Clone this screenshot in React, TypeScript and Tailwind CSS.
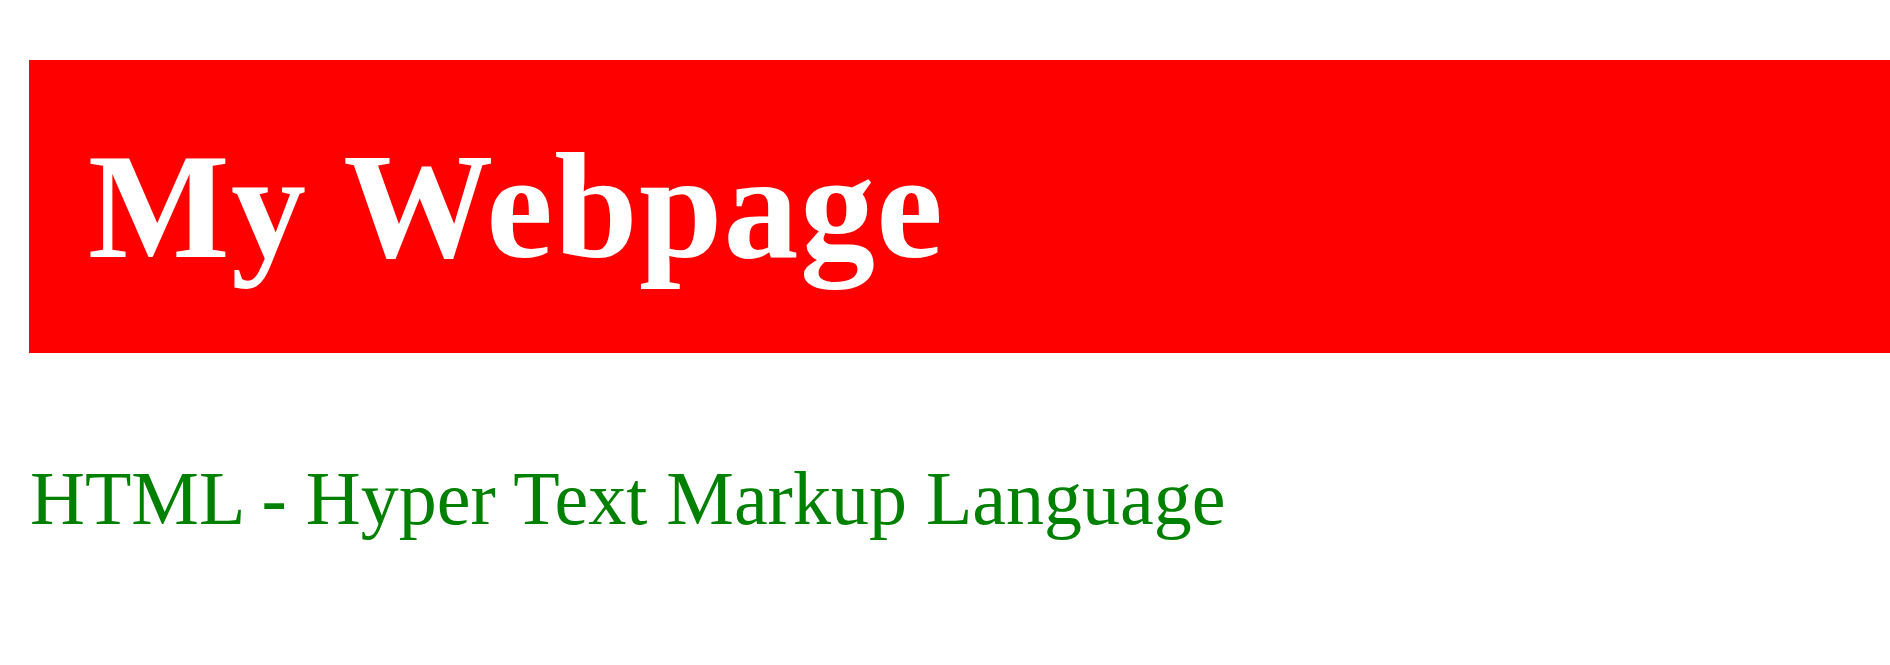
import React from 'react';

export default function App() {
  return (
    <div className="min-h-[665px] bg-white pt-[60px] font-['Liberation_Serif','Times_New_Roman',serif]">
      <div className="ml-[29px] h-[293px] w-[1900px] bg-[#ff0000] pl-[59px] pt-[71px]">
        <h1 className="text-[150px] font-bold leading-none tracking-[1.3px] text-white">My Webpage</h1>
      </div>
      <p className="mt-[107px] pl-[30px] text-[76px] leading-none text-[#008000]">
        HTML - Hyper Text Markup Language
      </p>
    </div>
  );
}
